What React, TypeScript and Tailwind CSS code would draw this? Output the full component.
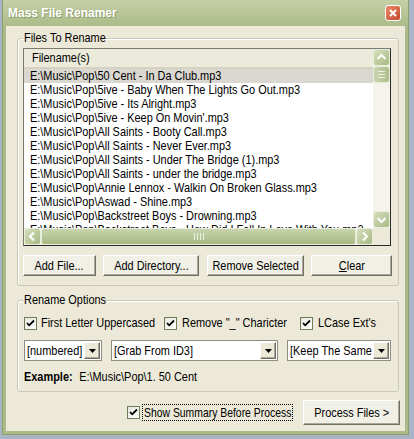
import React from "react";

const rows = [
  "E:\\Music\\Pop\\50 Cent - In Da Club.mp3",
  "E:\\Music\\Pop\\5ive - Baby When The Lights Go Out.mp3",
  "E:\\Music\\Pop\\5ive - Its Alright.mp3",
  "E:\\Music\\Pop\\5ive - Keep On Movin'.mp3",
  "E:\\Music\\Pop\\All Saints - Booty Call.mp3",
  "E:\\Music\\Pop\\All Saints - Never Ever.mp3",
  "E:\\Music\\Pop\\All Saints - Under The Bridge (1).mp3",
  "E:\\Music\\Pop\\All Saints - under the bridge.mp3",
  "E:\\Music\\Pop\\Annie Lennox - Walkin On Broken Glass.mp3",
  "E:\\Music\\Pop\\Aswad - Shine.mp3",
  "E:\\Music\\Pop\\Backstreet Boys - Drowning.mp3",
  "E:\\Music\\Pop\\Backstreet Boys - How Did I Fall In Love With You.mp3",
];

function N({ children, className = "" }: { children: React.ReactNode; className?: string }) {
  return (
    <span className={"inline-block whitespace-nowrap scale-x-[0.82] " + className}>{children}</span>
  );
}

function ArrowBtn({ dir }: { dir: "up" | "down" | "left" | "right" }) {
  const d =
    dir === "up"
      ? "M4.5 10 L8.5 6 L12.5 10"
      : dir === "down"
      ? "M4.5 7 L8.5 11 L12.5 7"
      : dir === "left"
      ? "M10 4.5 L6 8.5 L10 12.5"
      : "M7 4.5 L11 8.5 L7 12.5";
  return (
    <div className="w-[17px] h-[17px] shrink-0 rounded-[3px] border border-[#e9eedb] bg-gradient-to-br from-[#d6dfbd] to-[#a8b984] flex items-center justify-center">
      <svg width="17" height="17" viewBox="0 0 17 17" className="-m-px">
        <path d={d} fill="none" stroke="#ffffff" strokeWidth="2" />
      </svg>
    </div>
  );
}

function Check() {
  return (
    <div className="w-[13px] h-[13px] shrink-0 border border-[#6e7f58] bg-gradient-to-br from-[#e6e6dc] to-[#ffffff] flex items-center justify-center">
      <svg width="11" height="11" viewBox="0 0 11 11">
        <path d="M2 5 L4.2 7.3 L9 2.5" fill="none" stroke="#000" strokeWidth="1.8" />
      </svg>
    </div>
  );
}

function Btn({ children, className = "" }: { children: React.ReactNode; className?: string }) {
  return (
    <div
      className={
        "flex items-center justify-center overflow-visible bg-[#f1f0e6] border border-t-[#ffffff] border-l-[#ffffff] border-r-[#716f64] border-b-[#716f64] shadow-[inset_-1px_-1px_0_#aca899] text-[13.33px] leading-[16px] text-black " +
        className
      }
    >
      <N className="origin-center">{children}</N>
    </div>
  );
}

function DropBtn() {
  return (
    <div className="w-[16px] h-[17px] shrink-0 bg-[#ece9d8] border border-t-[#ffffff] border-l-[#ffffff] border-r-[#716f64] border-b-[#716f64] shadow-[inset_-1px_-1px_0_#aca899] flex items-center justify-center">
      <svg width="7" height="4" viewBox="0 0 7 4">
        <path d="M0 0 H7 L3.5 4 Z" fill="#000" />
      </svg>
    </div>
  );
}

function Combo({ text, className = "" }: { text: string; className?: string }) {
  return (
    <div className={"h-[21px] flex items-center border border-[#8f8e84] bg-white p-px " + className}>
      <div className="flex-1 overflow-hidden pl-[1px] text-[13.33px] leading-[17px]">
        <N className="origin-left">{text}</N>
      </div>
      <DropBtn />
    </div>
  );
}

export default function App() {
  return (
    <div className="w-[414px] h-[439px] bg-[#a8b4c8] overflow-hidden font-['Liberation_Sans','Arial',sans-serif] text-black">
      <div className="ml-[2px] w-[407px] h-[435px] flex flex-col bg-[#abba88] border-x border-b border-[#8c9f66]">
        {/* title bar */}
        <div className="h-[26px] shrink-0 flex items-center bg-gradient-to-b from-[#c4cfa6] to-[#adbc8a] pl-[5px] pr-[7px]">
          <div className="flex-1 font-bold text-[12px] text-white [text-shadow:1px_1px_0_#8d9d6a]">
            Mass File Renamer
          </div>
          <div className="w-[16px] h-[16px] rounded-[3px] border border-white bg-gradient-to-br from-[#e88868] to-[#c44a2b] flex items-center justify-center">
            <svg width="10" height="10" viewBox="0 0 10 10">
              <path d="M2 2 L8 8 M8 2 L2 8" stroke="#fff" strokeWidth="2" />
            </svg>
          </div>
        </div>
        {/* body */}
        <div className="flex-1 mx-[3px] mb-[3px] bg-[#ece9d8] flex flex-col">
          {/* Files to rename group */}
          <div className="relative mt-[12px] ml-[11px] mr-[6px] h-[248px] border border-[#c9c7b6] rounded-[3px] shadow-[inset_1px_1px_0_#ffffff]">
            <div className="absolute left-[5px] -top-[9px] bg-[#ece9d8] px-[1px] text-[13.33px] leading-[16px] w-[82px] overflow-visible">
              <N className="origin-left">Files To Rename</N>
            </div>
            <div className="mt-[9px] ml-[5px] mr-[7px] h-[198px] border border-[#2b2b2b] border-t-[#7a7a70] border-l-[#7a7a70] bg-white flex flex-col">
              <div className="flex flex-1 min-h-0">
                <div className="flex-1 flex flex-col min-w-0 overflow-hidden">
                  <div className="h-[20px] shrink-0 bg-[#ebeadb] border-b-[2px] border-[#d6d2c2] pl-[8px] text-[13.33px] leading-[18px]">
                    <N className="origin-left">Filename(s)</N>
                  </div>
                  <div className="flex-1 overflow-hidden">
                    {rows.map((r, i) => (
                      <div
                        key={i}
                        className={
                          "h-[14px] pl-[6px] text-[13.33px] leading-[14px] whitespace-nowrap " +
                          (i === 0 ? "bg-[#d9d7cf]" : "")
                        }
                      >
                        <N className="origin-left">{r}</N>
                      </div>
                    ))}
                  </div>
                </div>
                <div className="w-[17px] shrink-0 flex flex-col bg-[#f4f4ec]">
                  <ArrowBtn dir="up" />
                  <div className="h-[17px] rounded-[3px] border border-[#e9eedb] bg-gradient-to-r from-[#c9d5ae] to-[#aebe8b] flex flex-col items-center justify-center gap-[2px]">
                    <div className="w-[7px] h-px bg-[#eef2e2]" />
                    <div className="w-[7px] h-px bg-[#eef2e2]" />
                    <div className="w-[7px] h-px bg-[#eef2e2]" />
                  </div>
                  <div className="flex-1" />
                  <ArrowBtn dir="down" />
                </div>
              </div>
              <div className="h-[17px] shrink-0 flex bg-[#f4f4ec]">
                <ArrowBtn dir="left" />
                <div className="flex-1 rounded-[3px] border border-[#e9eedb] bg-gradient-to-b from-[#c9d5ae] to-[#a7b883] flex items-center justify-center gap-[2px]">
                  <div className="w-px h-[7px] bg-[#eef2e2]" />
                  <div className="w-px h-[7px] bg-[#eef2e2]" />
                  <div className="w-px h-[7px] bg-[#eef2e2]" />
                  <div className="w-px h-[7px] bg-[#eef2e2]" />
                </div>
                <ArrowBtn dir="right" />
                <div className="w-[17px] bg-[#ece9d8]" />
              </div>
            </div>
            <div className="mt-[9px] ml-[5px] flex">
              <Btn className="w-[73px] h-[21px]">Add File...</Btn>
              <Btn className="ml-[7px] w-[96px] h-[21px]">Add Directory...</Btn>
              <Btn className="ml-[8px] w-[97px] h-[21px]">Remove Selected</Btn>
              <Btn className="ml-[7px] w-[81px] h-[21px]">
                <span className="underline">C</span>lear
              </Btn>
            </div>
          </div>
          {/* Rename options group */}
          <div className="relative mt-[14px] ml-[11px] mr-[6px] h-[92px] border border-[#c9c7b6] rounded-[3px] shadow-[inset_1px_1px_0_#ffffff]">
            <div className="absolute left-[5px] -top-[9px] bg-[#ece9d8] px-[1px] text-[13.33px] leading-[16px] w-[82px]">
              <N className="origin-left">Rename Options</N>
            </div>
            <div className="mt-[14px] ml-[6px] flex items-center text-[13.33px] leading-[16px]">
              <Check />
              <div className="ml-[4px] w-[123px]">
                <N className="origin-left">First Letter Uppercased</N>
              </div>
              <Check />
              <div className="ml-[5px] w-[118px]">
                <N className="origin-left">Remove "_" Charicter</N>
              </div>
              <Check />
              <div className="ml-[5px]">
                <N className="origin-left scale-x-[0.78]">LCase Ext's</N>
              </div>
            </div>
            <div className="mt-[9px] ml-[6px] flex">
              <Combo text="[numbered]" className="w-[78px]" />
              <Combo text="[Grab From ID3]" className="ml-[9px] w-[167px]" />
              <Combo text="[Keep The Same" className="ml-[9px] w-[104px]" />
            </div>
            <div className="mt-[8px] ml-[6px] text-[13.33px] leading-[16px] whitespace-nowrap">
              <N className="origin-left">
                <span className="font-bold">Example:</span>
                <span className="ml-[8px]">E:\Music\Pop\1. 50 Cent</span>
              </N>
            </div>
          </div>
          {/* bottom */}
          <div className="mt-[8px] flex items-center justify-end mr-[5px]">
            <Check />
            <div className="ml-[2px] w-[151px] h-[17px] border border-dotted border-black text-[13.33px] leading-[15px] pl-[1px]">
              <span className="inline-block whitespace-nowrap origin-left scale-x-[0.78]">Show Summary Before Process</span>
            </div>
            <Btn className="ml-[10px] w-[97px] h-[25px]">Process Files &gt;</Btn>
          </div>
        </div>
      </div>
    </div>
  );
}
